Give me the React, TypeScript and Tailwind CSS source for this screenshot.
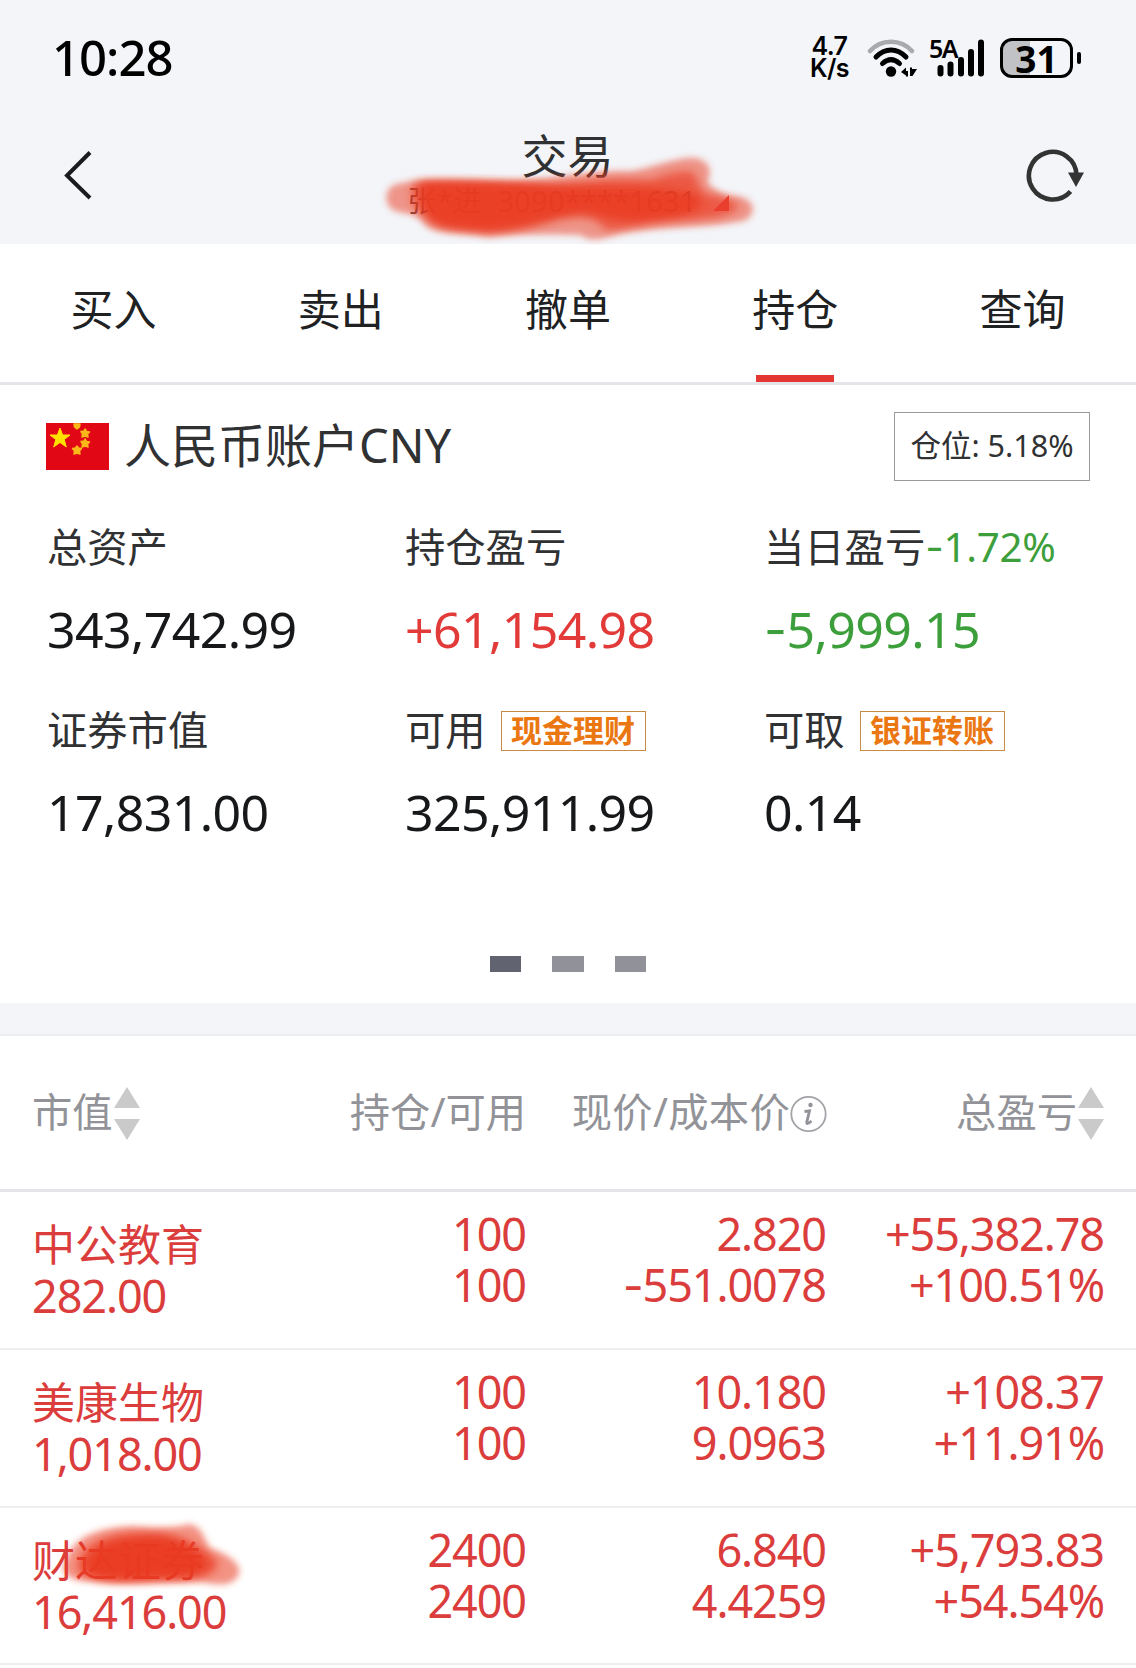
import React from 'react';
import { clsx } from 'clsx';

const tabs = ['买入', '卖出', '撤单', '持仓', '查询'];

interface Holding {
  name: string;
  marketValue: string;
  position: string;
  available: string;
  price: string;
  cost: string;
  profit: string;
  profitRate: string;
  marked?: boolean;
}

const holdings: Holding[] = [
  { name: '中公教育', marketValue: '282.00', position: '100', available: '100', price: '2.820', cost: '-551.0078', profit: '+55,382.78', profitRate: '+100.51%' },
  { name: '美康生物', marketValue: '1,018.00', position: '100', available: '100', price: '10.180', cost: '9.0963', profit: '+108.37', profitRate: '+11.91%' },
  { name: '财达证券', marketValue: '16,416.00', position: '2400', available: '2400', price: '6.840', cost: '4.4259', profit: '+5,793.83', profitRate: '+54.54%', marked: true },
];

// The minus sign is wider than the one Noto Sans has
function Num({ value }: { value: string }) {
  if (!value.startsWith('-')) return <>{value}</>;
  return (
    <>
      <span className="font-['Inter'] leading-none">-</span>
      {value.slice(1)}
    </>
  );
}

function WifiIcon() {
  return (
    <svg width="50" height="42" viewBox="0 0 50 42" fill="none" strokeLinecap="round">
      <path d="M3 13C14 0.500 34 0.500 45 13" stroke="#a9aaad" strokeWidth="4.500" />
      <path d="M9 19C18 9.500 30 9.500 39 19" stroke="#000" strokeWidth="5" />
      <path d="M15.500 25.500C21 20.500 27 20.500 32.500 25.500" stroke="#000" strokeWidth="5" />
      <circle cx="24" cy="33.500" r="5.200" fill="#000" />
      <path d="M34 34L39 29.500V33H41V38.500H39V37.500ZM43 29.500H45V31L50 31L45.500 38H43Z" fill="#000" />
    </svg>
  );
}

function SignalIcon() {
  return (
    <div className="relative h-[42px] w-[55px]">
      <span className="absolute -top-[5px] left-0 font-['Noto_Sans',sans-serif] text-[25px] leading-[30px] font-semibold tracking-[-1.5px]">5A</span>
      <svg width="55" height="42" viewBox="0 0 55 42" stroke="#000" strokeWidth="6" strokeLinecap="round">
        <path d="M11.500 30V35.500M21.500 26.500V35.500M32 22V35.500M42 14V35.500M52 4.500V35.500" />
      </svg>
    </div>
  );
}

function Battery() {
  return (
    <div className="flex items-center gap-1">
      <div className="relative flex h-10 w-[73px] items-center justify-center rounded-[12px] border-[3px] border-black bg-linear-to-r from-[#c1c2c5] from-40% to-[#f3f5f9] to-40%">
        <span className="pt-px text-[37px] leading-[50px] font-bold">31</span>
      </div>
      <div className="h-3 w-1 rounded-full bg-black" />
    </div>
  );
}

function StatusBar() {
  return (
    <div className="flex h-[110px] items-start justify-between pr-[55px] pl-[52px] text-black">
      <span className="pt-[30px] text-[49px] leading-[54px] font-medium tracking-[-1px]">10:28</span>
      <div className="flex items-start pt-[38px]">
        <div className="mr-[18px] -mt-[3px] flex flex-col items-center font-['Inter'] text-[25px] leading-[22px] font-semibold tracking-[-0.6px]">
          <span>4.7</span>
          <span>K/s</span>
        </div>
        <div className="mr-3"><WifiIcon /></div>
        <div className="mr-4"><SignalIcon /></div>
        <Battery />
      </div>
    </div>
  );
}

function AccountMark() {
  return (
    <svg className="absolute top-[10px] left-[370px]" width="400" height="130" viewBox="0 0 400 130" fill="none">
      <defs>
        <filter id="soft" x="-20%" y="-20%" width="140%" height="140%">
          <feGaussianBlur stdDeviation="3" />
        </filter>
        <filter id="softer" x="-20%" y="-30%" width="140%" height="160%">
          <feGaussianBlur stdDeviation="4.5" />
        </filter>
      </defs>
      <path d="M22 66C40 58 80 60 135 61C190 59 215 50 262 51C280 48 310 36 326 38C342 42 342 54 337 62C345 70 352 75 366 76C384 78 388 92 376 100C350 108 290 106 250 114C236 117 224 124 210 115C170 114 140 114 118 117C90 112 64 116 53 103C48 94 35 94 25 91C14 86 14 72 22 66Z" fill="#e93d22" fillOpacity="0.52" filter="url(#soft)" />
      <path d="M44 62C80 62 120 62 180 65C220 61 250 58 280 60C290 56 310 50 322 52C330 58 326 66 336 74C350 76 366 80 368 86C366 96 338 100 300 101C270 103 250 112 235 110C230 98 210 94 188 99C150 112 130 114 112 112C85 108 65 110 57 98C44 88 38 80 44 62Z" fill="#ea3b20" fillOpacity="0.68" filter="url(#softer)" />
      <path d="M52 62C90 61 130 62 190 66C235 68 300 64 328 76C340 90 315 97 280 100C260 104 240 98 215 92C190 94 140 112 110 110C80 108 66 106 58 96C50 84 48 74 52 62Z" fill="#ea3b20" fillOpacity="0.82" filter="url(#softer)" />
      <path d="M359 75V91H343Z" fill="#ea3f2f" />
    </svg>
  );
}

function NavBar() {
  return (
    <div className="relative flex h-[134px] items-start justify-between pr-[51px] pl-[60px]">
      <svg className="mt-[38px]" width="36" height="54" viewBox="0 0 36 54" fill="none" stroke="#1b1b1f" strokeWidth="4">
        <path d="M30 4.500L7 27.500L30 50" />
      </svg>
      <div className="flex flex-col items-center pt-[18px]">
        <h1 className="ml-[14px] text-[46px] leading-[54px] text-[#303133]">交易</h1>
        <p className="mr-[17px] text-[29px] leading-[38px] tracking-[0.2px] whitespace-pre text-[#553a3c]">张*进  3090****1631</p>
      </div>
      <svg className="mt-[38px]" width="60" height="56" viewBox="0 0 60 56" fill="none">
        <path d="M45.500 43.500A23.800 23.800 0 1 1 51.500 27" stroke="#333" strokeWidth="4.600" />
        <path d="M43 24.500H59L51 39Z" fill="#333" />
      </svg>
      <AccountMark />
    </div>
  );
}

function ChinaFlag() {
  return (
    <svg width="63" height="47" viewBox="0 0 63 47">
      <rect width="63" height="47" fill="#e20714" />
      <path d="M14 5L16.600 12H24L18.200 16.600L20.300 24L14 19.500L7.700 24L9.800 16.600L4 12H11.400Z" fill="#ffe200" stroke="#ffe200" strokeLinejoin="round" />
      <g fill="#fbb81a" stroke="#fbb81a" strokeWidth="1.500" strokeLinejoin="round">
        <path d="M28 1H34L33.500 4L31 6L28.500 4Z" />
        <path d="M39 6L40.500 8.500L43.500 9L41.500 11L42 14L39 13L36 14L36.500 11L35 8.500L38 8Z" />
        <path d="M39 16L40.500 18.500L43.500 19L41.500 21L42 24L39 23L36 24L36.500 21L35 18.500L38 18Z" />
        <path d="M31 23L32.500 25L35.500 25.500L33.500 28L34 31L31 30L28 31L28.500 28L26.500 25.500L29.500 25Z" />
      </g>
    </svg>
  );
}

function Tag({ children }: { children: React.ReactNode }) {
  return (
    <span className="mt-[2px] ml-[15px] flex h-[40px] w-[145px] items-center justify-center border border-[#c98a45] pb-px text-[31px] leading-none font-bold text-[#ea7711]">
      {children}
    </span>
  );
}

interface FigureProps {
  label: string;
  value: string;
  extra?: React.ReactNode;
  tone?: string;
}

function Figure({ label, value, extra, tone }: FigureProps) {
  return (
    <div>
      <div className="flex h-[60px] items-center text-[40.300px] text-[#303133]">
        {label}
        {extra}
      </div>
      <div className={clsx('mt-[19px] h-[67px] text-[50px] leading-[67px] tracking-[-0.6px]', tone ?? 'text-[#17181a]')}>
        <Num value={value} />
      </div>
    </div>
  );
}

function Summary() {
  return (
    <section className="h-[618px] bg-white pt-[27px]">
      <div className="flex h-[69px] items-center pr-[46px] pl-[46px]">
        <ChinaFlag />
        <span className="-mt-[3px] ml-[15px] text-[47px] leading-[60px] text-[#303133]">人民币账户CNY</span>
        <span className="ml-auto flex h-[69px] w-[196px] items-center justify-center border border-[#98999c] pb-[2px] text-[30.500px] text-[#303133]">仓位: 5.18%</span>
      </div>
      <div className="mt-[36px] grid grid-cols-[358px_359px_1fr] gap-y-[37px] pl-[47px]">
        <Figure label="总资产" value="343,742.99" />
        <Figure label="持仓盈亏" value="+61,154.98" tone="text-[#e23a38]" />
        <Figure label="当日盈亏" value="-5,999.15" tone="text-[#3d9f3b]" extra={<span className="tracking-[-0.3px] text-[#3d9f3b]"><Num value="-1.72%" /></span>} />
        <Figure label="证券市值" value="17,831.00" />
        <Figure label="可用" value="325,911.99" extra={<Tag>现金理财</Tag>} />
        <Figure label="可取" value="0.14" extra={<Tag>银证转账</Tag>} />
      </div>
      <div className="mt-[110px] flex justify-center gap-[31px]">
        <i className="h-4 w-[31px] bg-[#626371]" />
        <i className="h-4 w-8 bg-[#919299]" />
        <i className="h-4 w-[31px] bg-[#919299]" />
      </div>
    </section>
  );
}

function SortIcon() {
  return (
    <svg className="mt-[2px]" width="28" height="56" viewBox="0 0 28 56" fill="#cacaca">
      <path d="M14 1L27 22H1ZM14 54L27 33H1Z" />
    </svg>
  );
}

function InfoIcon() {
  return (
    <svg className="mt-[2px]" width="37" height="40" viewBox="0 0 37 40" fill="none">
      <circle cx="18.500" cy="20" r="17.200" stroke="#a3a4a8" strokeWidth="1.800" />
      <circle cx="20.500" cy="11" r="2.200" fill="#929398" />
      <path d="M14.500 17.500L19.500 16.800L16.800 28Q16.200 31.500 21.500 27" stroke="#929398" strokeWidth="2.800" />
    </svg>
  );
}

function HoldingRow({ item }: { item: Holding }) {
  return (
    <div className="grid h-[157.800px] grid-cols-[270px_224px_300px_278px] border-b-2 border-[#eceef0] pl-8 text-[45px] leading-[51px] tracking-[-1.100px] text-[#db3d3c]">
      <div className="relative pt-[27px]">
        <div className="text-[43px] tracking-normal">{item.name}</div>
        <div>{item.marketValue}</div>
        {item.marked && (
          <svg className="absolute top-[8px] left-[20px]" width="200" height="90" viewBox="0 0 200 90">
            <path d="M14 44C22 20 45 12 80 10C105 12 120 12 138 8C152 12 152 24 158 32C176 38 190 48 187 58C182 70 168 70 150 66C110 66 70 70 36 65C16 66 6 54 14 44Z" fill="#e93d22" fillOpacity="0.55" filter="url(#soft)" />
            <path d="M28 42C44 16 80 16 105 17C130 18 150 30 166 46C164 66 130 63 100 64C70 67 50 65 36 61C24 56 24 50 28 42Z" fill="#ea3b20" fillOpacity="0.75" filter="url(#softer)" />
            <path d="M34 46C50 24 80 22 105 22C125 24 142 34 154 46C150 62 120 60 100 61C70 63 50 62 40 58Z" fill="#ea3b20" fillOpacity="0.85" filter="url(#softer)" />
          </svg>
        )}
      </div>
      <div className="pt-[16px] text-right">
        <div>{item.position}</div>
        <div>{item.available}</div>
      </div>
      <div className="pt-[16px] text-right">
        <div>{item.price}</div>
        <div><Num value={item.cost} /></div>
      </div>
      <div className="pt-[16px] text-right">
        <div>{item.profit}</div>
        <div>{item.profitRate}</div>
      </div>
    </div>
  );
}

export default function App() {
  return (
    <div className="h-[1668px] w-[1136px] overflow-hidden bg-white font-['Noto_Sans','Noto_Sans_CJK_SC',sans-serif]">
      <header className="h-[244px] bg-[#f3f5f9]">
        <StatusBar />
        <NavBar />
      </header>

      <nav className="grid h-[141px] grid-cols-5 border-b-[3px] border-[#e4e5e8] bg-white">
        {tabs.map((tab) => (
          <div key={tab} className="flex flex-col items-center justify-between pt-[36px] text-[43px] leading-[60px] text-[#202123]">
            {tab}
            <span className={clsx('h-[7px] w-[78px]', tab === '持仓' && 'bg-[#e43633]')} />
          </div>
        ))}
      </nav>

      <Summary />

      <div className="h-[33px] border-b-2 border-[#eceef0] bg-[#f3f5f9]" />

      <section>
        <div className="flex h-[156px] items-center border-b-[3px] border-[#e4e5e8] pl-8 text-[40.300px] text-[#929398]">
          <div className="flex w-[270px] items-center">市值<SortIcon /></div>
          <div className="w-[224px] text-right">持仓/可用</div>
          <div className="flex w-[301px] items-center justify-end tracking-[0.3px]">现价/成本价<InfoIcon /></div>
          <div className="flex w-[278px] items-center justify-end">总盈亏<SortIcon /></div>
        </div>
        {holdings.map((item) => (
          <HoldingRow key={item.name} item={item} />
        ))}
      </section>
    </div>
  );
}
